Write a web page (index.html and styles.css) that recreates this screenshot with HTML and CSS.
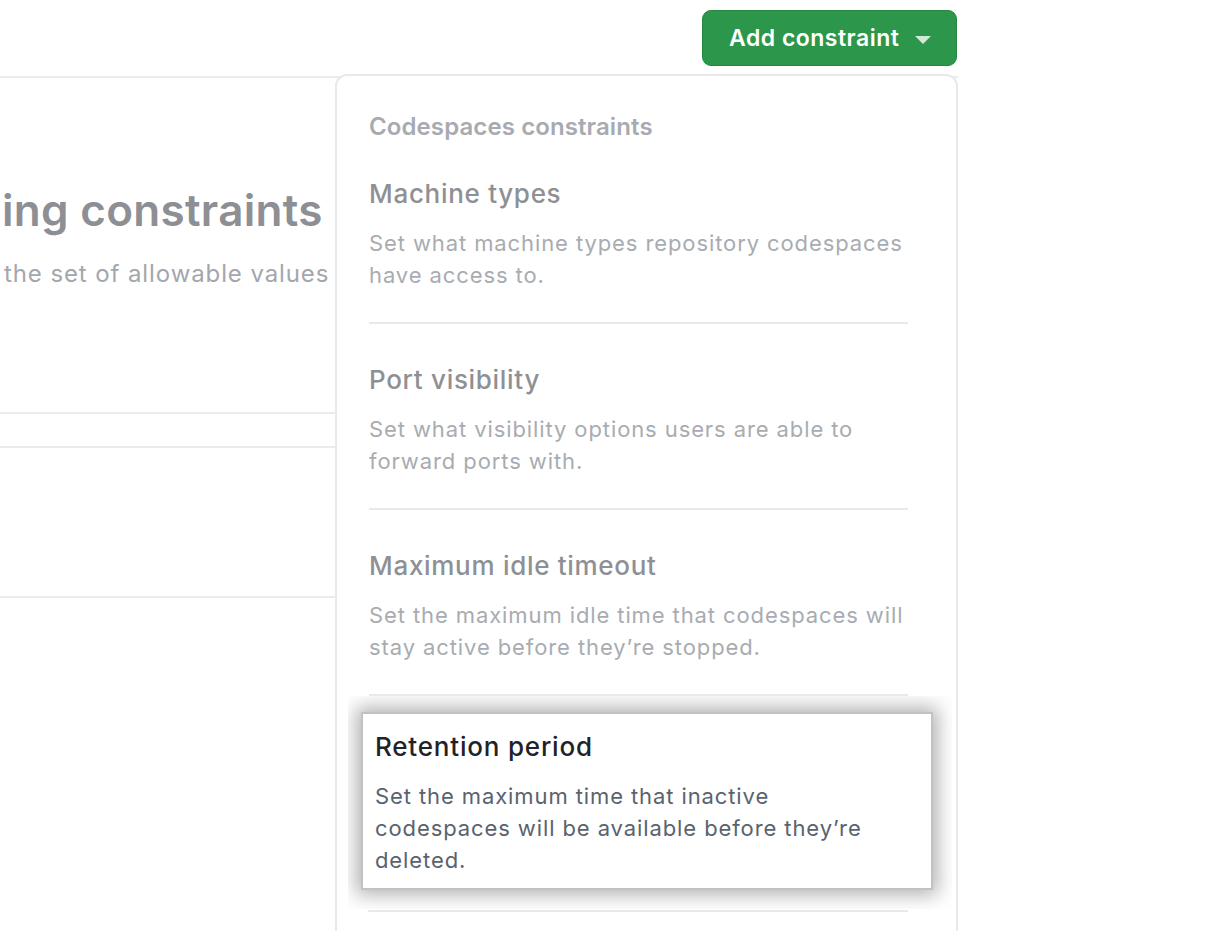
FILE: index.html
```html
<!DOCTYPE html>
<html lang="en">
<head>
<meta charset="utf-8">
<title>Add constraint</title>
<link rel="stylesheet" href="styles.css">
</head>
<body>
<div class="page">
  <div class="topbar">
    <button class="add-btn" type="button">
      <span class="add-label">Add constraint</span>
      <span class="caret"></span>
    </button>
  </div>
  <div class="panel">
    <div class="panel-head">
      <h2 class="panel-title">ing constraints</h2>
      <p class="panel-sub">the set of allowable values</p>
    </div>
    <div class="panel-row row-a"></div>
    <div class="panel-row row-b"></div>
    <div class="panel-row row-c"></div>
  </div>

  <div class="menu">
    <div class="menu-header">Codespaces constraints</div>
    <div class="menu-item">
      <div class="item-title">Machine types</div>
      <div class="item-desc">Set what machine types repository codespaces have access to.</div>
    </div>
    <div class="menu-item">
      <div class="item-title">Port visibility</div>
      <div class="item-desc">Set what visibility options users are able to forward ports with.</div>
    </div>
    <div class="menu-item">
      <div class="item-title">Maximum idle timeout</div>
      <div class="item-desc">Set the maximum idle time that codespaces will stay active before they’re stopped.</div>
    </div>
    <div class="highlight-wrap">
      <div class="highlight">
        <div class="hl-title">Retention period</div>
        <div class="hl-desc">Set the maximum time that inactive codespaces will be available before they’re deleted.</div>
      </div>
    </div>
    <div class="menu-divider"></div>
  </div>
</div>
</body>
</html>
```

FILE: styles.css
```css
* { box-sizing: border-box; }
html, body {
  margin: 0;
  padding: 0;
  background: #ffffff;
}
body {
  width: 1217px;
  height: 931px;
  overflow: hidden;
  font-family: Inter, "Noto Sans", "Liberation Sans", sans-serif;
}
.page {
  position: relative;
  width: 1217px;
  height: 931px;
}
.topbar {
  display: flex;
  justify-content: flex-start;
  padding: 10px 0 0 702px;
  height: 66px;
}
.add-btn {
  display: flex;
  align-items: center;
  width: 255px;
  height: 56px;
  padding: 0 0 0 26px;
  background: #2c974b;
  border: 1px solid #25873f;
  border-radius: 9px;
  color: #ffffff;
  font-family: inherit;
  font-size: 23px;
  font-weight: 600;
  letter-spacing: 0.5px;
  cursor: pointer;
}
.add-label { line-height: 1; }
.caret {
  width: 0;
  height: 0;
  margin-left: 16px;
  border-left: 8px solid transparent;
  border-right: 8px solid transparent;
  border-top: 8px solid #d3e9d8;
  margin-top: 3px;
}
.panel {
  margin-top: 10px;
  width: 958px;
  border-top: 2px solid #e8ebef;
}
.panel-head {
  padding: 105px 0 0 2px;
  height: 334px;
  white-space: nowrap;
}
.panel-title {
  margin: 0;
  font-size: 44px;
  line-height: 55px;
  font-weight: 600;
  color: #8e8f94;
  letter-spacing: 0.3px;
}
.panel-sub {
  margin: 20px 0 0 2px;
  font-size: 24px;
  line-height: 32px;
  letter-spacing: 0.9px;
  color: #a3a7ac;
}
.panel-row { border-top: 2px solid #e8ebef; }
.row-a { height: 34px; }
.row-b { height: 150px; }
.row-c { height: 100px; }

.menu {
  position: absolute;
  left: 335px;
  top: 74px;
  width: 623px;
  height: 900px;
  background: #ffffff;
  border: 2px solid #e6e9ed;
  border-radius: 12px;
  padding-top: 40px;
}
.menu-header {
  margin: 0 48px 0 32px;
  font-size: 24px;
  line-height: 22px;
  font-weight: 600;
  letter-spacing: 0.1px;
  color: #a7abb1;
}
.menu-item {
  margin: 0 48px 0 32px;
  padding: 38px 0 31px;
  border-bottom: 2px solid #e6e9ed;
}
.item-title {
  font-size: 26px;
  line-height: 36px;
  font-weight: 500;
  letter-spacing: 0.7px;
  color: #8e9094;
}
.item-desc {
  margin-top: 15px;
  font-size: 22px;
  line-height: 32px;
  letter-spacing: 0.9px;
  color: #a8acb1;
}
.highlight-wrap {
  margin: 0 4px 0 11px;
  padding: 16px 19px 19px 13px;
  background: #ffffff;
  overflow: hidden;
}
.highlight {
  background: #ffffff;
  border: 2px solid #c2c2c2;
  padding: 15px 14px 12px 12px;
  box-shadow: 0 0 18px 5px rgba(0, 0, 0, 0.3);
}
.hl-title {
  font-size: 26px;
  line-height: 36px;
  font-weight: 500;
  letter-spacing: 0.8px;
  color: #1f2328;
}
.hl-desc {
  margin-top: 15px;
  max-width: 500px;
  font-size: 22px;
  line-height: 32px;
  letter-spacing: 0.9px;
  color: #59636e;
}
.menu-divider {
  margin: 1px 48px 0 31px;
  border-bottom: 2px solid #e6e9ed;
}
```
